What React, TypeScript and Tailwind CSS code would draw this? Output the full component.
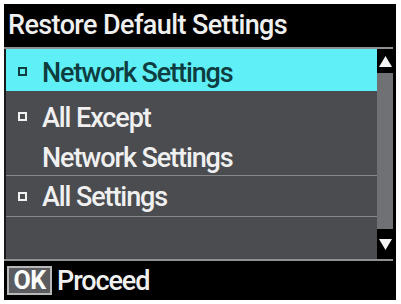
import React from "react";

const font = { fontFamily: 'Roboto, "Liberation Sans", Arial, sans-serif' };

export default function App() {
  return (
    <div className="w-[401px] h-[304px] bg-white pt-[4px] pl-[4px]" style={font}>
      <div className="w-[392px] h-[296px] bg-black flex flex-col">
        <div className="h-[43px] pt-[6px] pl-[4px] text-[27px] font-medium leading-[30px] text-[#f0f0f0] tracking-[-0.6px] whitespace-nowrap">
          Restore Default Settings
        </div>
        <div className="h-[2px] bg-[#8e9092] mr-[3px]" />
        <div className="flex h-[210px] mr-[3px]">
          <div className="w-[2px] bg-[#1a1a1a]" />
          <div className="flex-1 bg-[#4a4c50] flex flex-col text-[27px] font-medium tracking-[-1.1px]">
            <div className="relative h-[42px] bg-[#5ef0f6] text-[#0e3d40] pl-[36px] pt-[3px] leading-[42px] whitespace-nowrap">
              <span className="absolute left-[12px] top-[18px] w-[9px] h-[9px] border-[2px] border-[#0e3d40] bg-[#5ef0f6]" />
              Network Settings
            </div>
            <div className="relative h-[84px] text-[#f0f0f0] pl-[36px] pt-[7px] leading-[40px] whitespace-nowrap">
              <span className="absolute left-[12px] top-[21px] w-[9px] h-[9px] border-[2px] border-[#f2f2f2]" />
              <div>All Except</div>
              <div>Network Settings</div>
            </div>
            <div className="h-[1px] bg-[#85878a]" />
            <div className="relative h-[40px] text-[#f0f0f0] pl-[36px] pt-[0px] leading-[42px] whitespace-nowrap">
              <span className="absolute left-[12px] top-[16px] w-[9px] h-[9px] border-[2px] border-[#f2f2f2]" />
              All Settings
            </div>
            <div className="h-[1px] bg-[#85878a]" />
            <div className="flex-1" />
          </div>
          <div className="w-[16px] flex flex-col">
            <div className="h-[24px] bg-black flex items-center justify-center">
              <svg width="13" height="11" viewBox="0 0 13 11">
                <polygon points="6.5,0 13,11 0,11" fill="#f4f4f4" />
              </svg>
            </div>
            <div className="flex-1 bg-[#6f7175]" />
            <div className="h-[30px] bg-black flex items-center justify-center">
              <svg width="13" height="11" viewBox="0 0 13 11">
                <polygon points="0,0 13,0 6.5,11" fill="#f4f4f4" />
              </svg>
            </div>
          </div>
        </div>
        <div className="h-[2px] bg-[#8e9092] mr-[3px]" />
        <div className="flex-1 flex items-start pt-[5px] pl-[3px] gap-[5px]">
          <div className="w-[45px] h-[29px] border-[2px] border-[#b8b8b8] bg-[#5a5c5f] flex items-center justify-center text-white font-bold text-[25px] leading-none tracking-[-0.5px]">
            OK
          </div>
          <div className="text-[27px] font-medium leading-[30px] text-[#f0f0f0] tracking-[-1.1px]">Proceed</div>
        </div>
      </div>
    </div>
  );
}
